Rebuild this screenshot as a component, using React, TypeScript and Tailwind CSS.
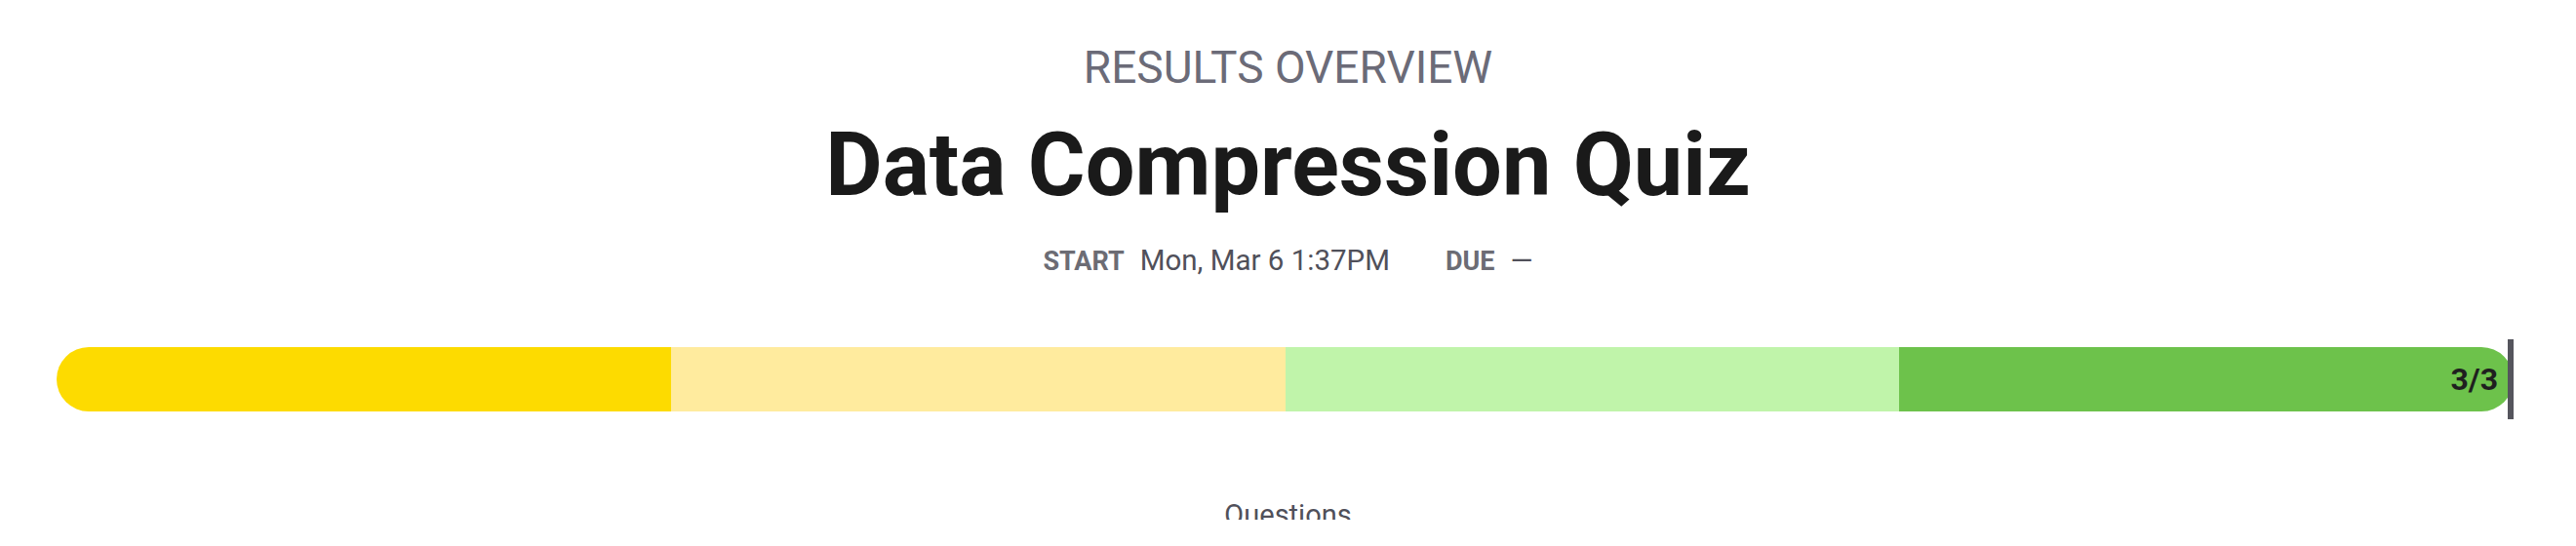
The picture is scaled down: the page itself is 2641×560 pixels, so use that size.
import React from 'react';

const segments = [
  { color: 'bg-[#fddb00]' },
  { color: 'bg-[#ffeb9e]' },
  { color: 'bg-[#c0f4aa]' },
  { color: 'bg-[#6dc24b]', label: '3/3' },
];

const App: React.FC = () => {
  return (
    <div className="w-full h-[560px] bg-white font-['Roboto',sans-serif]">
      <div className="h-[533px] overflow-hidden">
        <div className="flex flex-col items-center pt-[46px]">
          <p className="text-[46px] leading-[46px] text-[#6b6b78]">RESULTS OVERVIEW</p>
          <h1 className="mt-[32px] text-[90px] leading-[91px] font-bold text-[#1a1a1a]">Data Compression Quiz</h1>
          <div className="mt-[38px] flex items-baseline h-[29px] leading-[29px]">
            <span className="text-[27px] font-bold text-[#6c6c74]">START</span>
            <span className="ml-[16px] text-[29.5px] text-[#50505a]">Mon, Mar 6 1:37PM</span>
            <span className="ml-[57px] text-[27px] font-bold text-[#6c6c74]">DUE</span>
            <span className="ml-[16px] text-[29.5px] text-[#50505a]">—</span>
          </div>
        </div>

        <div className="mt-[66px] pl-[58px] pr-[64px]">
          <div className="relative h-[82px] flex items-center">
            <div className="flex w-full h-[66px] rounded-full overflow-hidden">
              {segments.map((s, i) => (
                <div key={i} className={`flex-1 flex items-center justify-end pr-[16px] ${s.color}`}>
                  {s.label && (
                    <span className="text-[32px] font-bold text-[#1f1f1f] leading-none">{s.label}</span>
                  )}
                </div>
              ))}
            </div>
            <div className="absolute right-0 top-0 bottom-0 w-[6px] bg-[#55555d]" />
          </div>
        </div>

        <div className="mt-[84px] flex justify-center">
          <span className="text-[29px] leading-[29px] text-[#50505a]">Questions</span>
        </div>
      </div>
    </div>
  );
};

export default App;
